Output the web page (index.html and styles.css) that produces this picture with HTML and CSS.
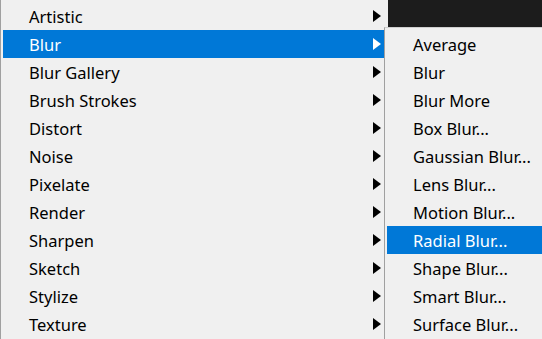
FILE: index.html
```html
<!DOCTYPE html>
<html>
<head>
<meta charset="utf-8">
<link rel="stylesheet" href="styles.css">
</head>
<body>
<div class="main">
  <div class="item"><span class="label">Artistic</span><span class="arrow"></span></div>
  <div class="item active"><span class="label">Blur</span><span class="arrow"></span></div>
  <div class="item"><span class="label">Blur Gallery</span><span class="arrow"></span></div>
  <div class="item"><span class="label">Brush Strokes</span><span class="arrow"></span></div>
  <div class="item"><span class="label">Distort</span><span class="arrow"></span></div>
  <div class="item"><span class="label">Noise</span><span class="arrow"></span></div>
  <div class="item"><span class="label">Pixelate</span><span class="arrow"></span></div>
  <div class="item"><span class="label">Render</span><span class="arrow"></span></div>
  <div class="item"><span class="label">Sharpen</span><span class="arrow"></span></div>
  <div class="item"><span class="label">Sketch</span><span class="arrow"></span></div>
  <div class="item"><span class="label">Stylize</span><span class="arrow"></span></div>
  <div class="item"><span class="label">Texture</span><span class="arrow"></span></div>
</div>
<div class="sub">
  <div class="sitem">Average</div>
  <div class="sitem">Blur</div>
  <div class="sitem">Blur More</div>
  <div class="sitem">Box Blur...</div>
  <div class="sitem">Gaussian Blur...</div>
  <div class="sitem">Lens Blur...</div>
  <div class="sitem">Motion Blur...</div>
  <div class="sitem active">Radial Blur...</div>
  <div class="sitem">Shape Blur...</div>
  <div class="sitem">Smart Blur...</div>
  <div class="sitem">Surface Blur...</div>
</div>
</body>
</html>
```
FILE: styles.css
```css
html, body {
  margin: 0;
  padding: 0;
}
body {
  width: 542px;
  height: 339px;
  overflow: hidden;
  background: #1c1c1c;
  position: relative;
  font-family: "Noto Sans", "Open Sans", sans-serif;
  font-size: 16.5px;
  color: #000;
}
.main {
  width: 388px;
  height: 339px;
  box-sizing: border-box;
  background: #f0f0f0;
  border-left: 1px solid #a0a0a0;
  padding: 2px 0 0 2px;
}
.item {
  height: 28px;
  box-sizing: border-box;
  padding-top: 1px;
  display: flex;
  align-items: center;
  padding-left: 26px;
  padding-right: 7px;
}
.label {
  flex: 1;
}
.arrow {
  width: 0;
  height: 0;
  margin-top: -1px;
  border-top: 6px solid transparent;
  border-bottom: 6px solid transparent;
  border-left: 8px solid #000;
}
.item.active {
  background: #0078d7;
  color: #fff;
}
.item.active .arrow {
  border-left-color: #fff;
}
.sub {
  position: absolute;
  left: 384px;
  top: 27px;
  right: 0;
  bottom: 0;
  background: #f0f0f0;
  border-left: 1px solid #a0a0a0;
  border-top: 1px solid #cfcfcf;
  padding: 2px 0 0 2px;
}
.sitem {
  height: 28px;
  line-height: 29px;
  padding-left: 26px;
}
.sitem.active {
  background: #0078d7;
  color: #fff;
}
```
